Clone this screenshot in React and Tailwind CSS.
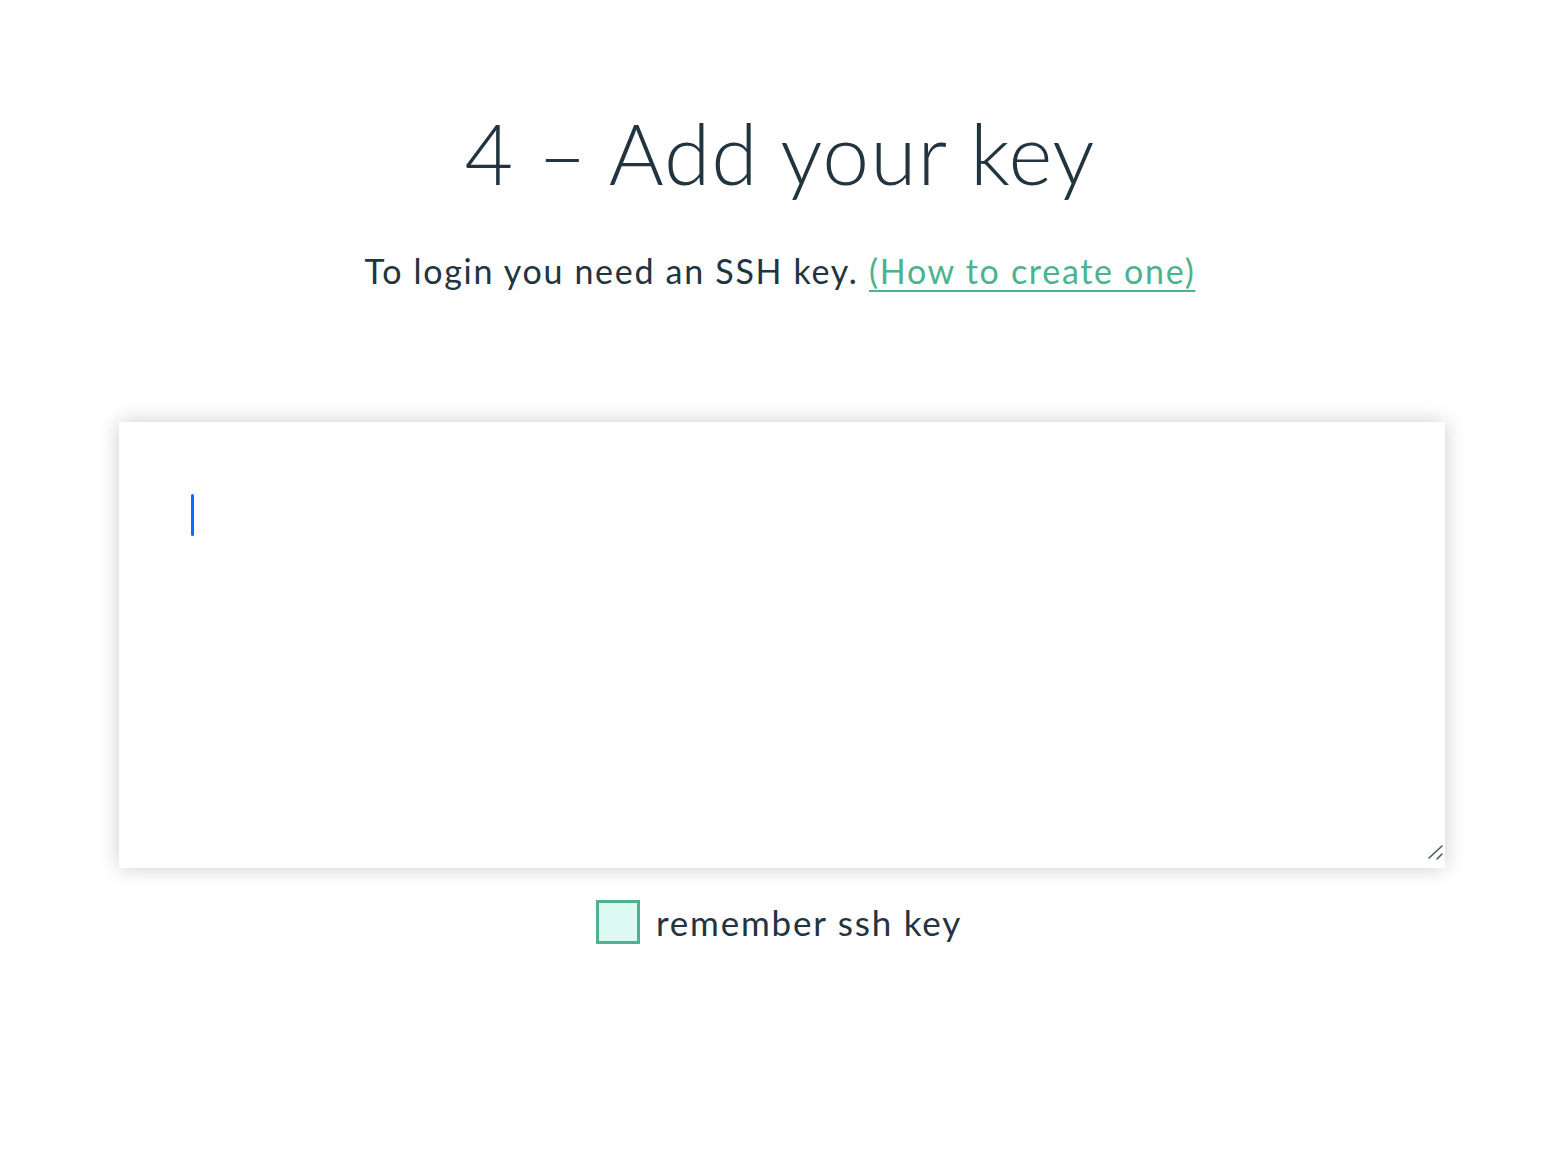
import React from "react"

export default function App() {
    return (
        <div className="min-h-screen w-full bg-white text-[#22343f]" style={{ fontFamily: "Lato, 'Noto Sans', sans-serif" }}>
            <div className="flex flex-col items-center pt-[111px]">
                <h1 className="text-[84px] font-light leading-none tracking-[1px]">
                    4 – Add your key
                </h1>
                <p className="mt-[59px] text-[34px] font-normal leading-none tracking-[1.7px]">
                    To login you need an SSH key.{" "}
                    <a href="#" className="text-[#4bb38f] underline decoration-2 underline-offset-[6px]">
                        (How to create one)
                    </a>
                </p>
            </div>

            <div className="relative ml-[119px] mr-[115px] mt-[134px]">
                <textarea
                    className="block h-[446px] w-full resize-none bg-white px-[72px] py-[72px] text-[32px] outline-none shadow-[0_0_20px_rgba(0,0,0,0.2)]"
                    spellCheck={false}
                />
                {/* caret */}
                <div className="pointer-events-none absolute left-[72px] top-[72px] h-[42px] w-[3px] rounded-sm bg-[#0a6cff]" />
                {/* resize grip */}
                <svg className="pointer-events-none absolute bottom-[8px] right-[1px]" width="16" height="16" viewBox="0 0 16 16">
                    <line x1="1" y1="14" x2="14" y2="2" stroke="#4a5863" strokeWidth="1.6" strokeLinecap="round" />
                    <line x1="9" y1="15" x2="14" y2="10" stroke="#4a5863" strokeWidth="1.6" strokeLinecap="round" />
                </svg>
            </div>

            <label className="mt-[32px] flex items-center justify-center gap-[16px] pr-[2px]">
                <span className="h-[44px] w-[44px] border-[3px] border-[#4bb38f] bg-[#dcfaf2]" />
                <span className="text-[35px] font-normal leading-none tracking-[1.8px]">remember ssh key</span>
            </label>
        </div>
    )
}
